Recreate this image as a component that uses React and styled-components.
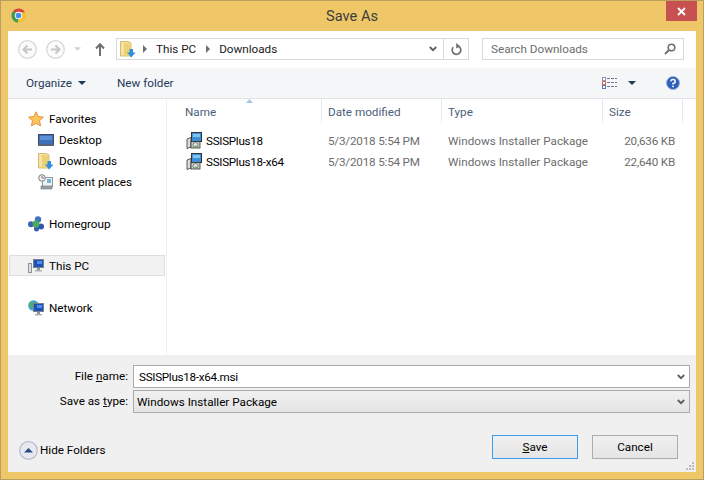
import React from 'react';
import styled, { createGlobalStyle } from 'styled-components';

const Global = createGlobalStyle`
  html, body { margin: 0; padding: 0; background: #fff; }
  * { box-sizing: border-box; }
  body { font-family: Roboto, "Noto Sans", sans-serif; font-size: 11.7px; color: #000; }
`;

// Window chrome
const Window = styled.div`
  width: 704px;
  height: 480px;
  display: flex;
  flex-direction: column;
  background: #efc768;
  border: 1px solid #b89f5e;
  padding: 0 7px 7px;
`;
const TitleBar = styled.div`
  height: 30px;
  flex: none;
  display: grid;
  grid-template-columns: 1fr auto 1fr;
  margin: 0 -1px;
`;
const TitleIcon = styled.div`
  padding: 7px 0 0 4px;
`;
const Title = styled.div`
  font-size: 14.6px;
  line-height: 31px;
  color: #3d3d3d;
`;
const Close = styled.div`
  justify-self: end;
  width: 31px;
  height: 20px;
  background: #c75050;
  display: flex;
  align-items: center;
  justify-content: center;
`;
const Dialog = styled.div`
  flex: 1;
  min-height: 0;
  display: flex;
  flex-direction: column;
  background: #fff;
`;

// Navigation row
const Nav = styled.div`
  height: 37px;
  flex: none;
  display: flex;
  align-items: center;
  padding: 0 12px 1px 10px;
`;
const NavButtons = styled.div`
  width: 98px;
  flex: none;
  display: flex;
  align-items: center;
`;
const Field = styled.div`
  height: 22px;
  display: flex;
  align-items: center;
  border: 1px solid #d9d9d9;
  background: #fff;
`;
const AddressBar = styled(Field)`
  width: 353px;
  flex: none;
  padding-left: 3px;
`;
const CrumbGap = styled.span`
  width: 7px;
  flex: none;
`;
const Crumb = styled.span`
  color: #1a1a1a;
  margin: 0 10px 0 9px;
  line-height: 20px;
`;
const Spacer = styled.div`
  flex: 1;
`;
const AddressEnd = styled.div`
  width: 25px;
  height: 100%;
  border-left: 1px solid #d9d9d9;
  margin-left: 6px;
  display: flex;
  align-items: center;
  justify-content: center;
`;
const SearchBox = styled(Field)`
  width: 202px;
  flex: none;
  margin-left: 13px;
  padding: 0 7px 0 8px;
  justify-content: space-between;
  color: #6d6d6d;
`;

// Toolbar
const Toolbar = styled.div`
  height: 31px;
  flex: none;
  display: flex;
  align-items: center;
  background: #f5f6f7;
  border-bottom: 1px solid #dfe4e9;
  padding: 0 0 0 18px;
  color: #1e395b;
`;
const ToolText = styled.span`
  display: flex;
  align-items: center;
  gap: 6px;
  width: ${p => p.$w}px;
`;
const ToolIcons = styled.div`
  margin-left: auto;
  display: flex;
  align-items: center;
  padding-right: 16px;
`;

// Tree + file list
const Body = styled.div`
  flex: 1;
  min-height: 0;
  display: flex;
`;
const Sidebar = styled.div`
  width: 159px;
  flex: none;
  padding: 9px 1px 0;
  border-right: 1px solid #f0f0f0;
`;
const TreeRow = styled.div`
  height: 21px;
  display: flex;
  align-items: center;
  gap: 5px;
  padding-left: ${p => p.$indent}px;
  margin-bottom: ${p => p.$gap || 0}px;
  color: #000;
  ${p => p.$selected && `
    background: #f2f2f2;
    border: 1px solid #dedede;
    padding-left: ${p.$indent - 1}px;
  `}
`;
const IconSlot = styled.span`
  width: 16px;
  height: 16px;
  flex: none;
  display: block;
`;
const Main = styled.div`
  flex: 1;
  min-width: 0;
`;
const Columns = '155px 120px 161px 80px';
const Header = styled.div`
  position: relative;
  display: grid;
  grid-template-columns: ${Columns};
  height: 22px;
  color: #4c607a;
`;
const HeadCell = styled.div`
  padding-left: ${p => p.$first ? 18 : 6}px;
  line-height: 27px;
  border-right: 1px solid #e5eaef;
  border-image: linear-gradient(#e5eaef 70%, #fff) 1;
`;
const SortArrow = styled.svg`
  position: absolute;
  left: 79px;
  top: 0;
`;
const FileRow = styled.div`
  display: grid;
  grid-template-columns: ${Columns};
  height: 21px;
  align-items: center;
  color: #6d6d6d;
`;
const FileRows = styled.div`
  padding-top: 9px;
`;
const FileName = styled.div`
  padding-left: 19px;
  display: flex;
  align-items: center;
  gap: 4px;
  color: #000;
  letter-spacing: -.3px;
`;
const FileCell = styled.div`
  padding-left: 6px;
  white-space: nowrap;
  letter-spacing: ${p => p.$tight ? -.2 : 0}px;
`;
const FileSize = styled.div`
  text-align: right;
  padding-right: 8px;
  letter-spacing: -.2px;
`;

// Bottom panel
const Panel = styled.div`
  position: relative;
  height: 117px;
  flex: none;
  background: #f0f0f0;
  padding: 10px 6px 0 0;
`;
const Form = styled.div`
  display: grid;
  grid-template-columns: 120px 1fr;
  column-gap: 5px;
  row-gap: 2px;
`;
const Label = styled.label`
  text-align: right;
  line-height: 22px;
`;
const Combo = styled.div`
  height: 23px;
  display: flex;
  align-items: center;
  justify-content: space-between;
  padding: 0 4px 0 ${p => p.$pad}px;
  border: 1px solid #ababab;
  background: ${p => p.$select ? 'linear-gradient(#f0f0f0, #e5e5e5)' : '#fff'};
  letter-spacing: ${p => p.$select ? 0 : -.3}px;
`;
const Footer = styled.div`
  display: flex;
  align-items: flex-start;
  margin-top: 22px;
  padding: 0 12px 0 11px;
`;
const HideFolders = styled.div`
  height: 30px;
  display: flex;
  align-items: center;
  gap: 2px;
`;
const Button = styled.div`
  width: 86px;
  height: 24px;
  margin-left: ${p => p.$gap}px;
  display: flex;
  align-items: center;
  justify-content: center;
  background: linear-gradient(#f0f0f0, #e5e5e5);
  border: 1px solid ${p => p.$primary ? '#3c9cf0' : '#acacac'};
`;
const Grip = styled.svg`
  position: absolute;
  right: 2px;
  bottom: 2px;
`;

// Icons
const ChromeLogo = () => (
  <svg width="15" height="15" viewBox="0 0 16 16">
    <path d="M8 8 L2.2 3.2 A7.8 7.8 0 0 1 15 4.8 L8 4.8Z" fill="#d9453a" />
    <path d="M8 8 L8 4.8 L15 4.8 A7.8 7.8 0 0 1 7.4 15.8Z" fill="#f3c22f" />
    <path d="M8 8 L7.4 15.8 A7.8 7.8 0 0 1 2.2 3.2Z" fill="#3d9c4e" />
    <circle cx="8" cy="8" r="3.9" fill="#fff" />
    <circle cx="8" cy="8" r="3" fill="#4a8de8" />
  </svg>
);
const CloseIcon = () => (
  <svg width="9" height="9" viewBox="0 0 9 9">
    <path d="M1 1 L8 8 M8 1 L1 8" stroke="#fff" strokeWidth="1.9" />
  </svg>
);
const RoundArrow = ({ flip }) => (
  <svg width="19" height="19" viewBox="0 0 19 19" style={{ marginRight: 9 }}>
    <circle cx="9.5" cy="9.5" r="8.8" fill="#fbfbfb" stroke="#d6d6d6" strokeWidth="1.2" />
    <path d={flip ? 'M5 9.5 H13 M9.5 5.5 L13.5 9.5 L9.5 13.5' : 'M14 9.5 H6 M9.5 5.5 L5.5 9.5 L9.5 13.5'} fill="none" stroke="#c6c6c6" strokeWidth="2" />
  </svg>
);
const Caret = ({ color = '#1e395b', w = 8, h = 4 }) => (
  <svg width={w} height={h} viewBox="0 0 8 4" style={{ flex: 'none' }}>
    <path d="M0 0 H8 L4 4Z" fill={color} />
  </svg>
);
const UpArrow = () => (
  <svg width="10" height="13" viewBox="0 0 10 13" style={{ marginLeft: 14 }}>
    <path d="M5 13 V2 M1 5.5 L5 1.2 L9 5.5" fill="none" stroke="#6f6f6f" strokeWidth="2" />
  </svg>
);
const DownloadFolder = () => (
  <svg width="16" height="17" viewBox="0 0 16 17" style={{ flex: 'none', display: 'block' }}>
    <path d="M.5 .5 H8 L11 2 V15 H.5Z" fill="#f6e3a0" stroke="#c9ad5a" strokeWidth=".8" />
    <path d="M4 2 L11 3 V15 H4Z" fill="#edcf75" />
    <path d="M9.5 8 H13 V11.5 H15.5 L11.2 16.5 L7 11.5 H9.5Z" fill="#2f8fdc" />
  </svg>
);
const Tri = () => (
  <svg width="4" height="8" viewBox="0 0 4 8" style={{ flex: 'none' }}>
    <path d="M0 0 L4 4 L0 8Z" fill="#6e6e6e" />
  </svg>
);
const Chevron = ({ color = '#5e5e5e' }) => (
  <svg width="8" height="6" viewBox="0 0 8 6" style={{ flex: 'none' }}>
    <path d="M.8 1 L4 4.2 L7.2 1" fill="none" stroke={color} strokeWidth="1.8" />
  </svg>
);
const Refresh = () => (
  <svg width="11" height="13" viewBox="0 0 11 13">
    <path d="M7.5 3.2 A4.3 4.3 0 1 1 2.2 4.2" fill="none" stroke="#6f6f6f" strokeWidth="1.7" />
    <path d="M5.2 0 L9.2 3.2 L5.2 5.5Z" fill="#6f6f6f" />
  </svg>
);
const SearchIcon = () => (
  <svg width="12" height="12" viewBox="0 0 12 12">
    <circle cx="7.5" cy="4.5" r="3.3" fill="none" stroke="#6f6f6f" strokeWidth="1.6" />
    <path d="M5 7 L1 11" stroke="#6f6f6f" strokeWidth="2" />
  </svg>
);
const ViewIcon = () => (
  <svg width="15" height="12" viewBox="0 0 15 12" style={{ marginRight: 11 }}>
    <rect x=".5" y=".5" width="3" height="3" fill="#fff" stroke="#8a9ab0" />
    <rect x=".5" y="4.5" width="3" height="3" fill="#fff" stroke="#d06a5a" />
    <rect x=".5" y="8.5" width="3" height="3" fill="#fff" stroke="#5a7ab0" />
    <path d="M5 1.5 H15 M5 5.5 H15 M5 9.5 H15" stroke="#6b7a90" strokeDasharray="3 1" />
  </svg>
);
const HelpIcon = () => (
  <svg width="14" height="14" viewBox="0 0 14 14" style={{ marginLeft: 30 }}>
    <circle cx="7" cy="7" r="6.5" fill="#2d5fbb" stroke="#9bb0d4" />
    <path d="M4.8 5.3 A2.2 2 0 1 1 7 7.5 V8.5" fill="none" stroke="#fff" strokeWidth="1.5" />
    <rect x="6.2" y="9.6" width="1.6" height="1.6" fill="#fff" />
  </svg>
);
const Star = () => (
  <svg width="16" height="16" viewBox="0 0 16 16">
    <path d="M8 .8 L10.2 5.6 L15.4 6.2 L11.5 9.7 L12.6 15 L8 12.3 L3.4 15 L4.5 9.7 L.6 6.2 L5.8 5.6Z" fill="#fcc45c" stroke="#e8913a" />
  </svg>
);
const Desktop = () => (
  <svg width="16" height="16" viewBox="0 0 16 16">
    <rect x=".5" y="2.5" width="15" height="10" fill="#3f6fb5" stroke="#3c4a63" />
    <rect x="2" y="4" width="12" height="4" fill="#5c8fd6" />
    <rect x="0" y="12" width="16" height="2" fill="#5a6478" />
  </svg>
);
const Recent = () => (
  <svg width="16" height="16" viewBox="0 0 16 16">
    <rect x="4.5" y="3.5" width="10" height="9" fill="#eef3f6" stroke="#8b9aa3" />
    <rect x="9" y="5" width="4" height="4" fill="#74b3d8" />
    <circle cx="4" cy="4" r="3.3" fill="#f2f2f2" stroke="#7c7c7c" />
    <path d="M4 2 V4 H6" fill="none" stroke="#555" strokeWidth=".8" />
    <rect x="3" y="12" width="11" height="3" fill="#9aa0a3" stroke="#6f7578" strokeWidth=".6" />
  </svg>
);
const Homegroup = () => (
  <svg width="16" height="16" viewBox="0 0 16 16">
    <circle cx="3" cy="8.2" r="3" fill="#3b62b0" />
    <circle cx="10" cy="3.4" r="3.2" fill="#3f74bd" />
    <circle cx="13" cy="10.5" r="3" fill="#2f58a8" />
    <circle cx="8.5" cy="12.8" r="2.6" fill="#3b62b0" />
    <circle cx="8" cy="8" r="3.4" fill="#4cab5b" />
  </svg>
);
const Monitor = () => (
  <>
    <rect x="5.5" y="1.5" width="10" height="8" fill="#1f50b8" stroke="#77818c" />
    <rect x="9" y="3" width="5" height="3" fill="#4c90e8" />
    <rect x="9" y="10" width="3" height="2" fill="#8a949c" />
    <rect x="7" y="12" width="7" height="1.5" fill="#aeb4b9" />
  </>
);
const ThisPC = () => (
  <svg width="16" height="16" viewBox="0 0 16 16">
    <rect x=".5" y="5.5" width="3" height="9" fill="#dfe2e4" stroke="#8c9296" />
    <Monitor />
  </svg>
);
const Network = () => (
  <svg width="16" height="16" viewBox="0 0 16 16">
    <circle cx="5.5" cy="5.5" r="5.3" fill="#3ba7d8" />
    <path d="M1.5 3 L5.5 1.5 L7 6 L3 8.5Z" fill="#58b04c" />
    <g transform="translate(0 2)"><Monitor /></g>
  </svg>
);
const Installer = () => (
  <svg width="16" height="17" viewBox="0 0 16 17" style={{ flex: 'none', display: 'block' }}>
    <rect x="5.5" y=".5" width="10" height="9" fill="#3f8fd8" stroke="#333" />
    <rect x="7" y="2" width="7" height="3" fill="#7fc4ee" />
    <path d="M1 7 L5 5.5 V15 L1 16.5Z" fill="#dcdcdc" stroke="#333" strokeWidth=".8" />
    <rect x="5" y="9.5" width="9" height="6.5" fill="#c8c8c8" stroke="#333" strokeWidth=".8" />
    <circle cx="9.5" cy="13" r="2.5" fill="#e4e4e4" stroke="#4c4c4c" strokeWidth=".6" />
    <path d="M9.5 13 L11.5 15 L8 15.5Z" fill="#5fb548" />
  </svg>
);
const HideIcon = () => (
  <svg width="19" height="19" viewBox="0 0 19 19">
    <circle cx="9.5" cy="9.5" r="8.8" fill="#e6e9f0" stroke="#b5bccb" strokeWidth="1.2" />
    <path d="M5 11.5 L9.5 7 L14 11.5Z" fill="#2f4b86" />
  </svg>
);
const GripIcon = () => (
  <Grip width="8" height="8" viewBox="0 0 8 8">
    <path d="M6 0h2v2H6zM3 3h2v2H3zM6 3h2v2H6zM0 6h2v2H0zM3 6h2v2H3zM6 6h2v2H6z" fill="#bdbdbd" />
  </Grip>
);

const files = [
  { name: 'SSISPlus18', size: '20,636 KB' },
  { name: 'SSISPlus18-x64', size: '22,640 KB' },
];

const tree = [
  { label: 'Favorites', icon: <Star />, indent: 19 },
  { label: 'Desktop', icon: <Desktop />, indent: 29 },
  { label: 'Downloads', icon: <DownloadFolder />, indent: 29 },
  { label: 'Recent places', icon: <Recent />, indent: 29, gap: 21 },
  { label: 'Homegroup', icon: <Homegroup />, indent: 19, gap: 21 },
  { label: 'This PC', icon: <ThisPC />, indent: 19, gap: 21, selected: true },
  { label: 'Network', icon: <Network />, indent: 19 },
];

export default function App() {
  return (
    <>
      <Global />
      <Window>
        <TitleBar>
          <TitleIcon><ChromeLogo /></TitleIcon>
          <Title>Save As</Title>
          <Close><CloseIcon /></Close>
        </TitleBar>
        <Dialog>
          <Nav>
            <NavButtons>
              <RoundArrow />
              <RoundArrow flip />
              <Caret color="#d4d4d4" w={7} h={4} />
              <UpArrow />
            </NavButtons>
            <AddressBar>
              <DownloadFolder />
              <CrumbGap />
              <Tri />
              <Crumb>This PC</Crumb>
              <Tri />
              <Crumb>Downloads</Crumb>
              <Spacer />
              <Chevron />
              <AddressEnd><Refresh /></AddressEnd>
            </AddressBar>
            <SearchBox>
              Search Downloads
              <SearchIcon />
            </SearchBox>
          </Nav>
          <Toolbar>
            <ToolText $w={91}>Organize <Caret /></ToolText>
            <ToolText>New folder</ToolText>
            <ToolIcons>
              <ViewIcon />
              <Caret />
              <HelpIcon />
            </ToolIcons>
          </Toolbar>
          <Body>
            <Sidebar>
              {tree.map(t => (
                <TreeRow key={t.label} $indent={t.indent} $gap={t.gap} $selected={t.selected}>
                  <IconSlot>{t.icon}</IconSlot>
                  {t.label}
                </TreeRow>
              ))}
            </Sidebar>
            <Main>
              <Header>
                <HeadCell $first>Name</HeadCell>
                <HeadCell>Date modified</HeadCell>
                <HeadCell>Type</HeadCell>
                <HeadCell>Size</HeadCell>
                <SortArrow width="7" height="4" viewBox="0 0 7 4">
                  <path d="M0 4 L3.5 0 L7 4Z" fill="#a9c6e4" />
                </SortArrow>
              </Header>
              <FileRows>
                {files.map(f => (
                  <FileRow key={f.name}>
                    <FileName><Installer />{f.name}</FileName>
                    <FileCell $tight>5/3/2018 5:54 PM</FileCell>
                    <FileCell>Windows Installer Package</FileCell>
                    <FileSize>{f.size}</FileSize>
                  </FileRow>
                ))}
              </FileRows>
            </Main>
          </Body>
          <Panel>
            <Form>
              <Label>File <u>n</u>ame:</Label>
              <Combo $pad={5}>SSISPlus18-x64.msi<Chevron /></Combo>
              <Label>Save as <u>t</u>ype:</Label>
              <Combo $pad={3} $select>Windows Installer Package<Chevron /></Combo>
            </Form>
            <Footer>
              <HideFolders><HideIcon />Hide Folders</HideFolders>
              <Spacer />
              <Button $primary><span><u>S</u>ave</span></Button>
              <Button $gap={14}>Cancel</Button>
            </Footer>
            <GripIcon />
          </Panel>
        </Dialog>
      </Window>
    </>
  );
}
